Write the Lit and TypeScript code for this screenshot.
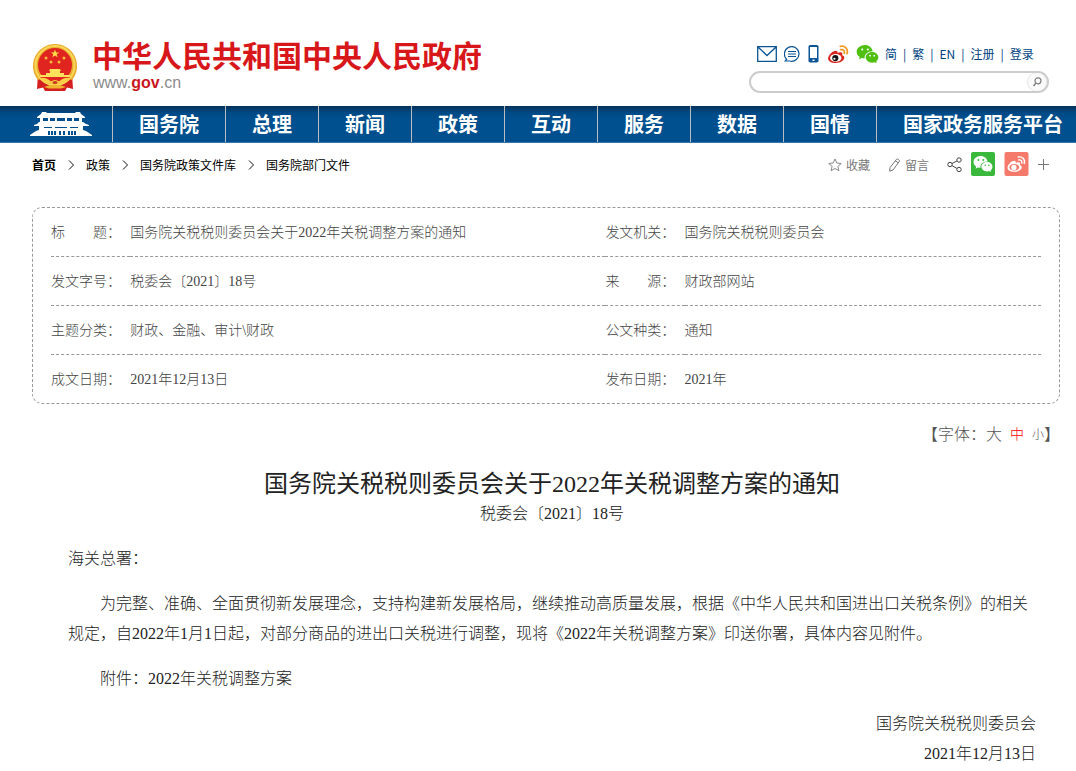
import { LitElement, html, css, svg } from "lit";
import { customElement, state } from "lit/decorators.js";

const WEIBO = svg`
  <path d="M10.2 8.1c-1.1-1.6-4.6-.6-7.3 2.2C.9 12.300 0 14.300 0 15.900 0 19 4 21 8.400 21c5.700 0 9.500-3.200 9.500-5.800 0-1.600-1.400-2.500-2.500-2.800.5-1.300.5-2.300-.1-2.900-1-.9-3-.6-4.900.1-.3-.1.200-.8-.2-1.500Z" />`;

const WECHAT = svg`
  <path fill-rule="evenodd" d="M9.300 1C4.200 1 0 4.300 0 8.500c0 2.300 1.300 4.400 3.400 5.800L2.600 17l3-1.500c1.100.3 2.200.5 3.300.5-.8-4.600 3.200-8.200 8.900-8.100C17 3.900 13.500 1 9.300 1ZM6.200 4.800a1.200 1.200 0 1 1 0 2.400 1.200 1.200 0 0 1 0-2.400Zm6.200 0a1.200 1.200 0 1 1 0 2.400 1.200 1.200 0 0 1 0-2.400Z" />
  <path fill-rule="evenodd" d="M17.300 8.700c-4.200 0-7.300 2.700-7.300 5.900s3.100 5.900 7.300 5.900c.9 0 1.700-.1 2.500-.4l2.400 1.200-.6-2.100c1.500-1.100 2.400-2.700 2.400-4.600 0-3.200-3-5.900-6.700-5.900Zm-2.500 3.100a1 1 0 1 1 0 2 1 1 0 0 1 0-2Zm4.700 0a1 1 0 1 1 0 2 1 1 0 0 1 0-2Z" />`;

const NAV = ["国务院", "总理", "新闻", "政策", "互动", "服务", "数据", "国情", "国家政务服务平台"];

const META = [
  ["标　　题：", "国务院关税税则委员会关于2022年关税调整方案的通知", "发文机关：", "国务院关税税则委员会"],
  ["发文字号：", "税委会〔2021〕18号", "来　　源：", "财政部网站"],
  ["主题分类：", "财政、金融、审计\\财政", "公文种类：", "通知"],
  ["成文日期：", "2021年12月13日", "发布日期：", "2021年"],
];

@customElement("site-header")
class SiteHeader extends LitElement {
  static styles = css`
    :host { display: block; }
    a { color: inherit; text-decoration: none; }
    svg { display: block; }
    .head { display: flex; justify-content: space-between; height: 106px; padding: 0 27px 0 32px; box-sizing: border-box; }
    .brand { display: flex; gap: 14px; padding-top: 33px; }
    .emblem { margin-top: 10px; }
    .name { font: bold 30px/44px "Noto Sans CJK SC", sans-serif; color: #d7171a; white-space: nowrap; margin-top: -1px; }
    .domain { font: 16px/18px "Liberation Sans", Arial, sans-serif; color: #8b8b8b; padding-left: 1px; margin-top: -2px; }
    .domain b { color: #c9151e; }
    .tools { width: 300px; padding-top: 43px; }
    .links { display: flex; align-items: center; height: 22px; margin-left: 8px; color: #00437f; font-size: 12px; line-height: 22px; white-space: nowrap; }
    .icons { display: flex; align-items: center; gap: 7px; margin-right: 6px; }
    .icons a { display: block; }
    .text { display: flex; }
    .text a + a::before { content: "|"; margin: 0 6px; }
    .search { display: flex; align-items: center; box-sizing: border-box; height: 22px; margin-top: 6px; border: 2px solid #ccc; border-radius: 11px; overflow: hidden; }
    .search input { flex: 1; min-width: 0; border: 0; outline: 0; background: none; padding: 0 10px; font-size: 12px; }
    .search button { width: 20px; height: 20px; padding: 3px; border: 1px solid #e6e6e6; border-radius: 10px; background: #fafafa; }
    .nav { display: flex; box-sizing: border-box; height: 37px; overflow: hidden; background: linear-gradient(#04335a, #004a86 7px, #00508f 14px); border-bottom: 1px solid #3a76ab; color: #fff; font: bold 20px/36px "Noto Sans CJK SC", sans-serif; }
    .nav a { flex: none; padding: 0 26px; border-left: 1px solid #b9bcc0; }
    .nav .home { padding: 5px 20px 0 30px; border: 0; }
  `;

  render() {
    return html`
      <header class="head">
        <div class="brand">
          <svg class="emblem" width="46" height="49" viewBox="0 0 46 49" aria-hidden="true">
            <path d="M6 31h34l1 15-6-1.500-2 3.500H13l-2-3.500L5 46Z" fill="#d3201f" />
            <path d="M23 1a22 22 0 0 1 17 36c-4-2-9-1-12 2l-5 2-5-2c-3-3-8-4-12-2A22 22 0 0 1 23 1Z" fill="#e9ac2b" />
            <circle cx="23" cy="22.500" r="19.500" fill="none" stroke="#f8d75a" stroke-width="2" />
            <circle cx="23" cy="22" r="17" fill="#e0241f" />
            <path d="m23 6.500 1.100 2.900h3.100l-2.500 1.900 1 3-2.700-1.800-2.700 1.800 1-3-2.500-1.900h3.100Z" fill="#ffdf48" />
            <g fill="#f6b93a"><circle cx="14" cy="15" r="1.500" /><circle cx="32" cy="15" r="1.500" /><circle cx="19" cy="19" r="1.500" /><circle cx="27" cy="19" r="1.500" /></g>
            <path d="M18 26h10l1 2h-1v2h4v2h6v2H8v-2h6v-2h4v-2h-1Z" fill="#ffe05a" />
            <path d="M8 34h30l-3 3.500H11Z" fill="#e0241f" />
            <path d="M7 35c6-1 9 1 12 3.500 2.500-2 5.500-2 8 0C30 36 33 34 39 35c-3 4-8 6-12 5.500-2.500 2.500-5.500 2.500-8 0C15 41 10 39 7 35Z" fill="#f8ce46" />
            <ellipse cx="23" cy="39.500" rx="2.500" ry="1.500" fill="#c8371f" />
            <path d="m12 44 6-2h10l6 2-5 1.500H17Z" fill="#f1b432" />
          </svg>
          <div>
            <div class="name">中华人民共和国中央人民政府</div>
            <div class="domain">www.<b>gov</b>.cn</div>
          </div>
        </div>
        <div class="tools">
          <div class="links">
            <div class="icons">
              <a href="#mail" aria-label="邮箱"><svg width="20" height="16" viewBox="0 0 20 16" fill="none" stroke="#0b5595" stroke-width="1.300"><path d="M.7.700h18.600v14.600H.7Zm0 0L10 9.500 19.300.7" /></svg></a>
              <a href="#chat" aria-label="互动"><svg width="16" height="16" viewBox="0 0 16 16" fill="none" stroke="#0b5595" stroke-width="1.200"><path d="M2.600 13.200A7.300 7.300 0 1 1 5.800 15H1.200ZM4 5.500h8M4 8h8M4 10.500h8" /></svg></a>
              <a href="#app" aria-label="客户端"><svg width="14" height="18" viewBox="-1.500 0 14 18"><path fill="#0b5595" fill-rule="evenodd" d="M1.500 0h7l1.500 1v15.500L8.500 17.500h-7L0 16.500V1Zm0 2v11h7V2ZM4 14.500v1.500h2v-1.500Z" /></svg></a>
              <a href="#weibo" aria-label="微博"><svg width="21" height="19" viewBox="0 1 23 21"><g fill="#d8261c">${WEIBO}</g><ellipse cx="8.500" cy="15.300" rx="6.300" ry="4.300" fill="#fff" /><circle cx="8" cy="15.500" r="3.400" fill="#151515" /><circle cx="7" cy="16.200" r="1.200" fill="#fff" /><path d="M14 6.200c2.800-.6 4.600 1.200 3.800 3.900M13.500 2.500c5.200-1 9 3 7.400 8" fill="none" stroke="#f19a27" stroke-width="2" stroke-linecap="round" /></svg></a>
              <a href="#wechat" aria-label="微信"><svg width="23" height="19" viewBox="0 1 24 21" fill="#4fbf10">${WECHAT}</svg></a>
            </div>
            <nav class="text"><a href="#jian">简</a><a href="#fan">繁</a><a href="#en">EN</a><a href="#reg">注册</a><a href="#login">登录</a></nav>
          </div>
          <form class="search" @submit=${(e: Event) => e.preventDefault()}>
            <input type="text" aria-label="搜索" />
            <button type="submit" aria-label="搜索"><svg width="12" height="12" viewBox="0 0 12 12" fill="none" stroke="#808080" stroke-width="1.200"><circle cx="7" cy="4.800" r="3" /><path d="M4.800 7.200 2.500 10" stroke-width="1.500" /></svg></button>
          </form>
        </div>
      </header>
      <nav class="nav">
        <a class="home" href="#home" aria-label="首页">
          <svg width="62" height="26" viewBox="0 0 62 26" fill="#fff">
            <path d="M12 1h4l1 1h28l1-1h4l1 2 4 3v1H7V6l4-3Z" />
            <path d="M10 7h3v5h-3Zm39 0h3v5h-3ZM13 10h36v2H13Zm5-3h2v3h-2Zm7 0h2v3h-2Zm10 0h2v3h-2Zm7 0h2v3h-2Z" />
            <path d="M9 11h44l3 2 3 1v1H4v-1l3-1Z" />
            <path d="M9 15h44v4l3 1 6 4v1H0v-1l6-4 3-1Z" />
            <path d="M14 16h8v1h-8Zm11 0h12v1H25Zm15 0h8v1h-8ZM18 20h8v4h-8Zm11 0h6v4h-6Zm9 0h8v4h-8Z" fill="#00508f" />
            <path d="M20 20h1v4h-1Zm3 0h1v4h-1Zm8 0h2v4h-2Zm9 0h1v4h-1Zm3 0h1v4h-1Z" />
          </svg>
        </a>
        ${NAV.map((t) => html`<a href="#nav">${t}</a>`)}
      </nav>
    `;
  }
}

@customElement("crumb-bar")
class CrumbBar extends LitElement {
  static styles = css`
    :host { display: flex; justify-content: space-between; padding: 9px 27px 0 32px; font-size: 12px; line-height: 24px; }
    a { color: inherit; text-decoration: none; }
    svg { display: block; }
    .trail { display: flex; align-items: center; gap: 11px; color: #000; padding-top: 1px; }
    .trail .first { font-weight: bold; }
    .share { display: flex; align-items: center; color: #777; height: 24px; }
    .item { display: flex; align-items: center; gap: 4px; margin-right: 18px; padding-top: 2px; }
    .tile { margin-left: 9px; }
    .plus { padding: 0; border: 0; background: none; margin-left: 9px; }
  `;

  render() {
    const sep = html`<svg width="8" height="10" viewBox="0 0 8 10" fill="none" stroke="#111"><path d="m2 .500 4.500 4.500L2 9.500" /></svg>`;
    return html`
      <nav class="trail">
        <a class="first" href="#home">首页</a>${sep}<a href="#policy">政策</a>${sep}<a href="#library">国务院政策文件库</a>${sep}<a href="#dept">国务院部门文件</a>
      </nav>
      <div class="share">
        <a class="item" href="#fav"><svg width="14" height="14" viewBox="0 0 14 14" fill="none" stroke="#888"><path d="m7 1 1.800 4 4.400.500-3.300 2.900 1 4.300L7 10.500l-3.900 2.200 1-4.300L.8 5.500 5.200 5Z" /></svg>收藏</a>
        <a class="item" href="#note"><svg width="13" height="14" viewBox="0 0 13 14" fill="none" stroke="#777"><path d="M8.500 1.300c1-.9 3.400.6 2.900 1.900L5 12l-3.300 1.200L2 9.700ZM7.300 2.800l3 2" /></svg>留言</a>
        <a href="#share" aria-label="分享"><svg width="15" height="16" viewBox="0 0 15 16" fill="none" stroke="#444"><circle cx="3" cy="8.500" r="2.200" /><circle cx="12" cy="4" r="2.200" /><circle cx="12" cy="13.500" r="2.200" /><path d="m5 7.500 4.900-2.500M5 9.600l4.900 2.800" /></svg></a>
        <a class="tile" href="#wechat" aria-label="微信"><svg width="24" height="24" viewBox="0 0 24 24"><rect width="24" height="24" rx="2" fill="#39b83b" /><g fill="#fff" transform="translate(2.500 3.200) scale(.79)">${WECHAT}</g></svg></a>
        <a class="tile" href="#weibo" aria-label="微博"><svg width="25" height="24" viewBox="0 0 25 24"><rect width="24" height="24" x=".500" rx="2" fill="#f57a6c" /><g transform="translate(3.500 3) scale(.8)"><g fill="#fff">${WEIBO}</g><ellipse cx="8.500" cy="15.300" rx="6" ry="4" fill="#f57a6c" /><circle cx="8" cy="15.500" r="3.300" fill="#fff" /><path d="M14 6.200c2.800-.6 4.600 1.200 3.800 3.900M13.500 2.500c5.200-1 9 3 7.400 8" fill="none" stroke="#fff" stroke-width="1.800" stroke-linecap="round" /></g></svg></a>
        <button class="plus" aria-label="更多"><svg width="11" height="11" viewBox="0 0 11 11" stroke="#777"><path d="M5.500 0v11M0 5.500h11" /></svg></button>
      </div>
    `;
  }
}

@customElement("doc-meta")
class DocMeta extends LitElement {
  static styles = css`
    :host { display: block; margin: 30px 16px 0 32px; padding: 0 18px; border: 1px dashed #999; border-radius: 10px; }
    table { width: 100%; border-collapse: separate; border-spacing: 0; table-layout: fixed; font-size: 14px; line-height: 20px; color: #444; }
    .label { width: 8%; white-space: nowrap; }
    .left { width: 48%; }
    th, td { padding: 15px 0 13px; font-weight: inherit; text-align: left; border-bottom: 1px dashed #999; }
    tr:last-child > * { border-bottom: 0; }
  `;

  render() {
    return html`<table>
      ${META.map(
        ([a, b, c, d]) => html`<tr>
          <th class="label" scope="row">${a}</th><td class="left">${b}</td>
          <th class="label" scope="row">${c}</th><td>${d}</td>
        </tr>`,
      )}
    </table>`;
  }
}

@customElement("doc-article")
class DocArticle extends LitElement {
  static styles = css`
    :host { display: block; padding: 0 16px 0 32px; color: #222; }
    .sizes { display: flex; justify-content: flex-end; align-items: center; margin-top: 21px; height: 20px; font-size: 16px; line-height: 20px; color: #555; }
    .sizes button { padding: 0; border: 0; background: none; color: inherit; font-family: inherit; font-weight: inherit; line-height: 20px; margin-right: 8px; cursor: pointer; }
    .sizes .large { font-size: 16px; }
    .sizes .medium { font-size: 14px; }
    .sizes .small { font-size: 12px; margin-right: 0; }
    .sizes .on { color: #f00; }
    .body { padding: 0 24px 0 36px; font-size: 16px; line-height: 30px; }
    h1 { margin: 24px 0 0; font-size: 24px; line-height: 30px; font-weight: normal; text-align: center; }
    .number { text-align: center; }
    p { margin: 15px 0; text-indent: 2em; }
    .to { text-indent: 0; }
    .sign { margin-bottom: 0; text-align: right; }
  `;

  @state() private size = "medium";

  private sizeButton(id: string, label: string) {
    return html`<button class="${id} ${this.size === id ? "on" : ""}" @click=${() => (this.size = id)}>${label}</button>`;
  }

  render() {
    return html`
      <div class="sizes">【字体：${this.sizeButton("large", "大")}${this.sizeButton("medium", "中")}${this.sizeButton("small", "小")}】</div>
      <article class="body">
        <h1>国务院关税税则委员会关于2022年关税调整方案的通知</h1>
        <div class="number">税委会〔2021〕18号</div>
        <p class="to">海关总署：</p>
        <p>为完整、准确、全面贯彻新发展理念，支持构建新发展格局，继续推动高质量发展，根据《中华人民共和国进出口关税条例》的相关规定，自2022年1月1日起，对部分商品的进出口关税进行调整，现将《2022年关税调整方案》印送你署，具体内容见附件。</p>
        <p>附件：2022年关税调整方案</p>
        <p class="sign">国务院关税税则委员会<br />2021年12月13日</p>
      </article>
    `;
  }
}

@customElement("app-root")
class AppRoot extends LitElement {
  static styles = css`
    :host { display: block; background: #fff; font-family: "Noto Sans CJK SC", sans-serif; text-spacing-trim: space-all; }
    .doc { font-family: "Liberation Serif", "Noto Sans CJK SC", serif; font-weight: 300; }
  `;

  render() {
    return html`
      <site-header></site-header>
      <crumb-bar></crumb-bar>
      <main class="doc">
        <doc-meta></doc-meta>
        <doc-article></doc-article>
      </main>
    `;
  }
}
